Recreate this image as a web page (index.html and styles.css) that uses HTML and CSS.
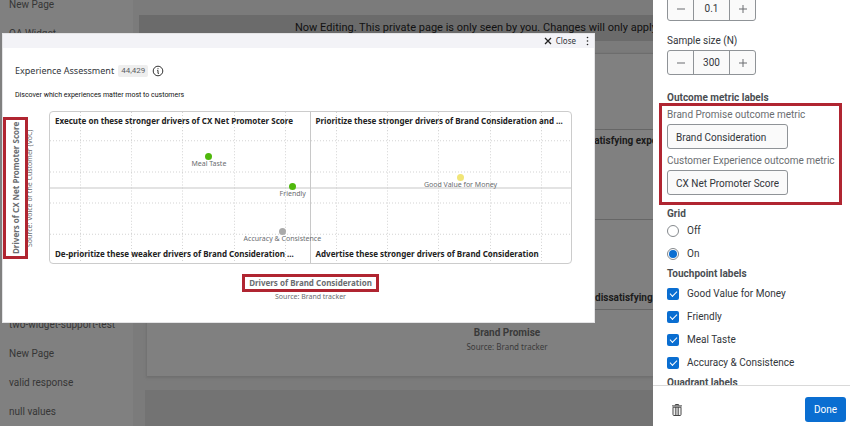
FILE: index.html
```html
<!DOCTYPE html>
<html lang="en">
<head>
<meta charset="utf-8">
<title>Experience Assessment</title>
<link rel="stylesheet" href="styles.css">
</head>
<body>
<div class="app">
  <nav class="sidebar" aria-label="Pages">
    <ul class="pages">
      <li><a href="#">New Page</a></li>
      <li><a href="#">QA Widget</a></li>
    </ul>
    <ul class="pages pages-lower">
      <li><a href="#">two-widget-support-test</a></li>
      <li><a href="#">New Page</a></li>
      <li><a href="#">valid response</a></li>
      <li><a href="#">null values</a></li>
    </ul>
  </nav>

  <main class="canvas">
    <div class="banner">Now Editing. This private page is only seen by you. Changes will only apply</div>
    <section class="back-card">
      <div class="back-plot">
        <div class="back-cell"><strong>satisfying experiences</strong></div>
        <div class="back-cell back-cell-low"><strong>dissatisfying</strong></div>
      </div>
      <div class="back-axis">
        <strong>Brand Promise</strong>
        <span>Source: Brand tracker</span>
      </div>
    </section>
    <div class="back-band"></div>
  </main>

  <aside class="panel">
    <div class="settings">
      <div class="stepper stepper-first">
        <button type="button" aria-label="Decrease"><svg viewBox="0 0 10 10"><path d="M1 5h8"/></svg></button>
        <input type="text" value="0.1" aria-label="Threshold">
        <button type="button" aria-label="Increase"><svg viewBox="0 0 10 10"><path d="M1 5h8M5 1v8"/></svg></button>
      </div>
      <label class="sample-label" for="sample">Sample size (N)</label>
      <div class="stepper">
        <button type="button" aria-label="Decrease"><svg viewBox="0 0 10 10"><path d="M1 5h8"/></svg></button>
        <input type="text" id="sample" value="300">
        <button type="button" aria-label="Increase"><svg viewBox="0 0 10 10"><path d="M1 5h8M5 1v8"/></svg></button>
      </div>
      <h3 class="outcome-title">Outcome metric labels</h3>
      <div class="outcome">
        <label for="brand">Brand Promise outcome metric</label>
        <input type="text" id="brand" value="Brand Consideration">
        <label for="cx">Customer Experience outcome metric</label>
        <input type="text" id="cx" value="CX Net Promoter Score">
      </div>
      <h3 class="grid-title">Grid</h3>
      <label class="option"><input type="radio" name="grid">Off</label>
      <label class="option"><input type="radio" name="grid" checked>On</label>
      <h3>Touchpoint labels</h3>
      <label class="option"><input type="checkbox" checked>Good Value for Money</label>
      <label class="option"><input type="checkbox" checked>Friendly</label>
      <label class="option"><input type="checkbox" checked>Meal Taste</label>
      <label class="option"><input type="checkbox" checked>Accuracy &amp; Consistence</label>
      <h3>Quadrant labels</h3>
    </div>
    <footer class="panel-foot">
      <button type="button" class="trash" aria-label="Delete">
        <svg viewBox="0 0 10 12"><path d="M3.4 1.4V.5h3.2v.9M0 1.9h10" fill="none" stroke="#444" stroke-width="1"/><path d="M1 3.2h8v7.3q0 1-1 1H2q-1 0-1-1z" fill="none" stroke="#444" stroke-width="1"/><path d="M3.4 3v8M5 3v8M6.6 3v8" stroke="#444" stroke-width=".8"/></svg>
      </button>
      <button type="button" class="done">Done</button>
    </footer>
  </aside>
</div>

<div class="modal" role="dialog" aria-label="Experience Assessment">
  <header class="modal-bar">
    <button type="button" class="close"><svg viewBox="0 0 8 8"><path d="M1 1l6 6M7 1L1 7"/></svg>Close</button>
    <button type="button" class="more" aria-label="More"><svg viewBox="0 0 3 10"><circle cx="1.5" cy="1.5" r=".8"/><circle cx="1.5" cy="5" r=".8"/><circle cx="1.5" cy="8.5" r=".8"/></svg></button>
  </header>
  <div class="modal-head">
    <h2>Experience Assessment</h2>
    <span class="count">44,429</span>
    <svg class="info" viewBox="0 0 12 12"><circle cx="6" cy="6" r="4.8"/><path d="M5.2 5.4H6v3M6 8.4h.9M6 3.2v1"/></svg>
  </div>
  <p class="lead">Discover which experiences matter most to customers</p>
  <div class="chart">
    <div class="y-axis">
      <strong>Drivers of CX Net Promoter Score</strong>
      <span>Source: Voice of the Customer (VoC)</span>
    </div>
    <div class="plot">
      <svg class="lines" viewBox="0 0 521 150" preserveAspectRatio="none">
        <path class="dots" d="M30.5 0V150M81.5 0V150M132.5 0V150M184.5 0V150M235.5 0V150M286.5 0V150M337.5 0V150M388.5 0V150M440.5 0V150M491.5 0V150M0 28.5H521M0 59.5H521M0 90.5H521M0 121.5H521"/>
        <path class="mid" d="M260.5 0V150M0 75.5H521"/>
      </svg>
      <div class="quadrants">
        <strong>Execute on these stronger drivers of CX Net Promoter Score</strong>
        <strong>Prioritize these stronger drivers of Brand Consideration and ...</strong>
        <strong>De-prioritize these weaker drivers of Brand Consideration ...</strong>
        <strong>Advertise these stronger drivers of Brand Consideration</strong>
      </div>
      <div class="point green" style="left:30.4%;top:29%"><span>Meal Taste</span></div>
      <div class="point green" style="left:46.5%;top:49.3%"><span>Friendly</span></div>
      <div class="point grey" style="left:44.5%;top:78.6%"><span>Accuracy &amp; Consistence</span></div>
      <div class="point yellow" style="left:78.7%;top:43%"><span>Good Value for Money</span></div>
    </div>
    <div class="x-axis">
      <strong>Drivers of Brand Consideration</strong>
      <span>Source: Brand tracker</span>
    </div>
  </div>
</div>
</body>
</html>
```
FILE: styles.css
```css
* { box-sizing: border-box; }

body {
  margin: 0;
  height: 100vh;
  overflow: hidden;
  font: 10px/18px Roboto, "Liberation Sans", sans-serif;
  color: #32363a;
  background: #7b7b7b;
}

h2, h3, p, ul { margin: 0; padding: 0; }
button, input { font: inherit; color: inherit; }
button { padding: 0; border: 0; background: none; }

.app {
  display: grid;
  grid-template-columns: 133px minmax(0, 1fr) 197px;
  height: 100%;
}

/* Page list */
.sidebar { overflow: hidden; background: #808080; }
.pages { list-style: none; margin-top: -10px; }
.pages-lower { margin-top: 262px; }
.pages li { height: 29px; padding: 6px 9px; white-space: nowrap; }
.pages a { color: #363636; text-decoration: none; }

/* Dimmed page */
.canvas {
  display: flex;
  flex-direction: column;
  padding: 15px 0 0 6px;
  overflow: hidden;
}
.banner {
  flex: none;
  height: 26px;
  padding-left: 156px;
  font-size: 11px;
  line-height: 26px;
  color: #111;
  white-space: nowrap;
  overflow: hidden;
  background: #6b6b6b;
}
.back-card {
  flex: none;
  margin: 12px 0 0 8px;
  padding-top: 75px;
  height: 323px;
  background: #808080;
  border-top: 1px solid #6d6d6d;
  box-shadow: 0 1px 2px 1px #707070;
}
.back-plot {
  display: grid;
  grid-template-rows: 89px 90px;
  border: solid #666;
  border-width: 1px 0;
}
.back-cell {
  padding: 2px 0 0 442px;
  font-size: 10px;
  color: #1b1b1b;
  white-space: nowrap;
  overflow: hidden;
}
.back-cell-low { padding: 69px 0 0 448px; border-top: 1px solid #666; }
.back-axis {
  display: flex;
  flex-direction: column;
  align-items: center;
  padding: 16px 0 0 214px;
  line-height: 14px;
  color: #3a3a3a;
}
.back-axis span { font-family: "Noto Sans", sans-serif; font-size: 8px; }
.back-band { flex: 1; margin: 14px 0 0 6px; background: #737373; }

/* Settings panel */
.panel {
  display: flex;
  flex-direction: column;
  min-height: 0;
  background: #fff;
}
.settings {
  flex: 1;
  min-height: 0;
  padding: 0 8px 0 14px;
  overflow: hidden;
}
.settings h3 { height: 17px; font-size: 10px; color: #4a4e52; }
.stepper {
  display: grid;
  grid-template-columns: 25px 1fr 25px;
  width: 89px;
  height: 25px;
  border: 1px solid #8f9397;
  border-radius: 3px;
  background: #fafafa;
}
.stepper-first { margin-top: -4px; }
.stepper input {
  min-width: 0;
  padding: 0;
  border: solid #8f9397;
  border-width: 0 1px;
  text-align: center;
  background: none;
}
.stepper button { display: grid; place-items: center; }
.stepper svg { width: 10px; height: 10px; stroke: #6a6d70; fill: none; }
.sample-label { display: block; margin-top: 11px; }
.settings .outcome-title { margin-top: 14px; margin-bottom: -3px; }
.outcome {
  position: relative;
  margin: 0 0 0 -8px;
  padding: 0 0 7px 5px;
  border: 3px solid #b02531;
}
.outcome label { display: block; color: #6a6d70; white-space: nowrap; }
.outcome input {
  display: block;
  width: 121px;
  height: 25px;
  margin-bottom: 3px;
  padding: 1px 8px 0;
  border: 1px solid #8f9397;
  border-radius: 3px;
  background: #fafafa;
}
.outcome input:last-child { margin-bottom: 0; }
.settings .grid-title { margin-bottom: -3px; }
.option { display: flex; align-items: center; gap: 8px; height: 23px; }
.option input {
  appearance: none;
  display: grid;
  place-items: center;
  width: 12px;
  height: 12px;
  margin: 0;
}
.option input[type="radio"] { border: 1px solid #85898d; border-radius: 50%; }
.option input[type="radio"]:checked::after {
  content: "";
  width: 8px;
  height: 8px;
  border-radius: 50%;
  background: #0a6ed1;
}
.option input[type="checkbox"] { border-radius: 2px; background: #0a6ed1; }
.option input[type="checkbox"]::after {
  content: "";
  width: 6px;
  height: 3px;
  margin-bottom: 2px;
  border: solid #fff;
  border-width: 0 0 1px 1px;
  transform: rotate(-45deg);
}
.panel-foot {
  display: flex;
  align-items: center;
  justify-content: space-between;
  height: 41px;
  padding: 7px 4px 0 19px;
  border-top: 1px solid #d9d9d9;
}
.trash svg { display: block; width: 10px; height: 12px; }
.done {
  width: 41px;
  height: 25px;
  border-radius: 3px;
  color: #fff;
  background: #0a6ed1;
}

/* Expanded widget */
.modal {
  position: absolute;
  top: 33px;
  left: 2px;
  right: 255px;
  height: 290px;
  background: #fff;
  border: 1px solid #e4e4e6;
}
.modal-bar {
  display: flex;
  justify-content: flex-end;
  align-items: center;
  gap: 10px;
  height: 14px;
  padding-right: 5px;
  font: 8px/14px "Noto Sans", sans-serif;
  background: #f3f3f7;
}
.close { display: flex; align-items: center; gap: 4px; }
.close svg { width: 8px; height: 8px; stroke: #222; stroke-width: 1.3; }
.more svg { display: block; width: 3px; height: 10px; fill: #222; }
.modal-head {
  display: flex;
  align-items: center;
  gap: 4px;
  height: 16px;
  margin: 15px 0 0 12px;
}
.modal-head h2 { font: 9px/16px "Noto Sans", sans-serif; }
.count {
  height: 12px;
  padding: 0 3px;
  font-size: 8px;
  line-height: 12px;
  color: #5b5f63;
  background: #eee;
  border-radius: 2px;
}
.info { width: 12px; height: 12px; fill: none; stroke: #333; }
.lead {
  padding: 8px 0 0 12px;
  font-size: 7px;
  line-height: 16px;
  color: #111;
}
.chart {
  display: grid;
  grid-template: 153px auto / 46px 1fr;
  margin: 8px 22px 0 0;
  font-family: "Noto Sans", sans-serif;
  color: #6a6d70;
}
.y-axis {
  display: flex;
  flex-direction: column;
  align-items: center;
  justify-self: start;
  align-self: center;
  writing-mode: vertical-rl;
  transform: rotate(180deg);
  white-space: nowrap;
}
.y-axis span {
  width: 10px;
  margin-right: -3px;
  font-size: 7px;
  line-height: 10px;
}
.y-axis strong {
  position: relative;
  z-index: 1;
  width: 25px;
  height: 142px;
  border: 3px solid #b02531;
  font-size: 8px;
  line-height: 19px;
  text-align: center;
  background: #fff;
}
.plot {
  position: relative;
  border: 1px solid #ccc;
  border-radius: 4px;
}
.lines { position: absolute; width: 100%; height: 100%; fill: none; }
.dots { stroke: #d4d4d4; stroke-dasharray: 1 2; }
.mid { stroke: #c8c8c8; }
.quadrants {
  position: relative;
  display: grid;
  grid-template: 1fr 1fr / 1fr 1fr;
  height: 100%;
  font-size: 8px;
  line-height: 18px;
  color: #222;
  white-space: nowrap;
}
.quadrants strong { padding-left: 5px; }
.quadrants strong:nth-child(n+3) { align-self: end; }
.point {
  position: absolute;
  width: 7px;
  height: 7px;
  margin: -3px;
  border-radius: 50%;
}
.point span {
  position: absolute;
  top: 6px;
  left: 50%;
  transform: translateX(-50%);
  font-size: 7px;
  line-height: 10px;
  white-space: nowrap;
}
.green { background: #4fb80c; }
.grey { background: #aaa; }
.yellow { background: #f1e577; }
.x-axis {
  grid-column: 2;
  display: flex;
  flex-direction: column;
  align-items: center;
  padding-top: 10px;
  font-size: 7px;
  line-height: 10px;
}
.x-axis strong {
  height: 18px;
  padding: 0 4px;
  border: 3px solid #b02531;
  font-size: 8px;
  line-height: 12px;
}
```
